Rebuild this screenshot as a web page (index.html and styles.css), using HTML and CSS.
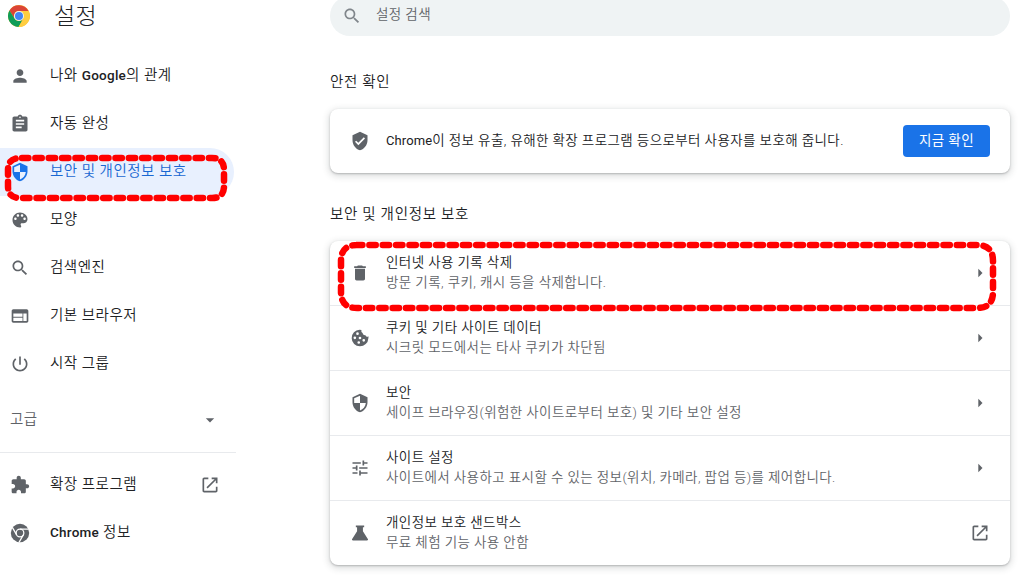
FILE: index.html
```html
<!DOCTYPE html>
<html lang="ko">
<head>
    <meta charset="UTF-8">
    <meta name="viewport" content="width=device-width, initial-scale=1.0">
    <title>설정</title>
    <link rel="stylesheet" href="styles.css">
</head>
<body>
    <aside class="sidebar">
        <div class="brand">
            <svg class="logo" viewBox="0 0 24 24">
                <circle cx="12" cy="12" r="12" fill="#fbc02d"/>
                <path d="M1.6 6A12 12 0 0 1 22.4 6.5H12A5.5 5.5 0 0 0 7.2 14.7z" fill="#db4437"/>
                <path d="M1.6 6A12 12 0 0 0 11.5 24l5.3-9.2A5.5 5.5 0 0 1 7.2 14.7z" fill="#0f9d58"/>
                <path d="M22.4 6.5H12a5.5 5.5 0 0 1 4.8 8.3L11.5 24A12 12 0 0 0 22.4 6.5z" fill="#ffcd40"/>
                <circle cx="12" cy="12" r="5.5" fill="#f1f1f1"/>
                <circle cx="12" cy="12" r="4.4" fill="#4285f4"/>
            </svg>
            <h1>설정</h1>
        </div>
        <nav class="menu">
            <a class="menu-item">
                <svg class="icon" viewBox="0 0 24 24"><path d="M12 12c2.21 0 4-1.79 4-4s-1.79-4-4-4-4 1.79-4 4 1.79 4 4 4zm0 2c-2.67 0-8 1.34-8 4v2h16v-2c0-2.66-5.33-4-8-4z"/></svg>
                <span>나와 <b>Google</b>의 관계</span>
            </a>
            <a class="menu-item">
                <svg class="icon" viewBox="0 0 24 24"><path d="M19 3h-4.18C14.4 1.84 13.3 1 12 1s-2.4.84-2.82 2H5c-1.1 0-2 .9-2 2v14c0 1.1.9 2 2 2h14c1.1 0 2-.9 2-2V5c0-1.1-.9-2-2-2zm-7 0c.55 0 1 .45 1 1s-.45 1-1 1-1-.45-1-1 .45-1 1-1zm2 14H7v-2h7v2zm3-4H7v-2h10v2zm0-4H7V7h10v2z"/></svg>
                <span>자동 완성</span>
            </a>
            <a class="menu-item active">
                <svg class="icon" viewBox="0 0 24 24"><path d="M12 1L3 5v6c0 5.55 3.84 10.74 9 12 5.16-1.26 9-6.45 9-12V5l-9-4zm0 10.99h7c-.53 4.12-3.28 7.79-7 8.94V12H5V6.3l7-3.11v8.8z"/></svg>
                <span>보안 및 개인정보 보호</span>
            </a>
            <a class="menu-item">
                <svg class="icon" viewBox="0 0 24 24"><path d="M12 3c-4.97 0-9 4.03-9 9s4.03 9 9 9c.83 0 1.5-.67 1.5-1.5 0-.39-.15-.74-.39-1.01-.23-.26-.38-.61-.38-.99 0-.83.67-1.5 1.5-1.5H16c2.76 0 5-2.24 5-5 0-4.42-4.03-8-9-8zm-5.5 9c-.83 0-1.5-.67-1.5-1.5S5.67 9 6.5 9 8 9.67 8 10.5 7.33 12 6.5 12zm3-4C8.67 8 8 7.33 8 6.5S8.67 5 9.5 5s1.5.67 1.5 1.5S10.33 8 9.5 8zm5 0c-.83 0-1.5-.67-1.5-1.5S13.67 5 14.5 5s1.5.67 1.5 1.5S15.33 8 14.5 8zm3 4c-.83 0-1.5-.67-1.5-1.5S16.67 9 17.5 9s1.5.67 1.5 1.5-.67 1.5-1.5 1.5z"/></svg>
                <span>모양</span>
            </a>
            <a class="menu-item">
                <svg class="icon" viewBox="0 0 24 24"><path d="M15.5 14h-.79l-.28-.27C15.41 12.59 16 11.11 16 9.5 16 5.91 13.09 3 9.5 3S3 5.91 3 9.5 5.91 16 9.5 16c1.61 0 3.09-.59 4.23-1.57l.27.28v.79l5 4.99L20.49 19l-4.99-5zm-6 0C7.01 14 5 11.99 5 9.5S7.01 5 9.5 5 14 7.01 14 9.5 11.99 14 9.5 14z"/></svg>
                <span>검색엔진</span>
            </a>
            <a class="menu-item">
                <svg class="icon" viewBox="0 0 24 24"><path d="M20 4H4c-1.1 0-1.99.9-1.99 2L2 18c0 1.1.9 2 2 2h16c1.1 0 2-.9 2-2V6c0-1.1-.9-2-2-2zm-5 14H4v-4h11v4zm0-5H4V9h11v4zm5 5h-4V9h4v9z"/></svg>
                <span>기본 브라우저</span>
            </a>
            <a class="menu-item">
                <svg class="icon" viewBox="0 0 24 24"><path d="M13 3h-2v10h2V3zm4.83 2.17l-1.42 1.42C17.99 7.86 19 9.81 19 12c0 3.87-3.13 7-7 7s-7-3.13-7-7c0-2.19 1.01-4.14 2.58-5.42L6.17 5.17C4.23 6.82 3 9.26 3 12c0 4.97 4.03 9 9 9s9-4.03 9-9c0-2.74-1.23-5.18-3.17-6.83z"/></svg>
                <span>시작 그룹</span>
            </a>
        </nav>
        <div class="advanced">
            <span>고급</span>
            <svg class="icon" viewBox="0 0 24 24"><path d="M7 10l5 5 5-5z"/></svg>
        </div>
        <nav class="menu menu-bottom">
            <a class="menu-item">
                <svg class="icon" viewBox="0 0 24 24"><path d="M20.5 11H19V7c0-1.1-.9-2-2-2h-4V3.5C13 2.12 11.88 1 10.5 1S8 2.12 8 3.5V5H4c-1.1 0-1.99.9-1.99 2v3.8H3.5c1.49 0 2.7 1.21 2.7 2.7s-1.21 2.7-2.7 2.7H2V20c0 1.1.9 2 2 2h3.8v-1.5c0-1.49 1.21-2.7 2.7-2.7 1.49 0 2.7 1.21 2.7 2.7V22H17c1.1 0 2-.9 2-2v-4h1.5c1.38 0 2.5-1.12 2.5-2.5S21.88 11 20.5 11z"/></svg>
                <span>확장 프로그램</span>
                <svg class="icon launch" viewBox="0 0 24 24"><path d="M19 19H5V5h5V3H5c-1.11 0-2 .9-2 2v14c0 1.1.89 2 2 2h14c1.1 0 2-.9 2-2v-5h-2v5zM14 3v2h3.59l-9.83 9.83 1.41 1.41L19 6.41V10h2V3h-7z"/></svg>
            </a>
            <a class="menu-item">
                <svg class="icon" viewBox="0 0 24 24">
                    <circle cx="12" cy="12" r="11"/>
                    <g fill="none" stroke="#fff" stroke-width="1.5">
                        <circle cx="12" cy="12" r="4.6"/>
                        <path d="M12 7.4h10.5M8 14.3L2.8 5.3M16 14.3L10.8 23.3"/>
                    </g>
                </svg>
                <span><b>Chrome</b> 정보</span>
            </a>
        </nav>
    </aside>

    <main class="content">
        <div class="search">
            <svg class="icon" viewBox="0 0 24 24"><path d="M15.5 14h-.79l-.28-.27C15.41 12.59 16 11.11 16 9.5 16 5.91 13.09 3 9.5 3S3 5.91 3 9.5 5.91 16 9.5 16c1.61 0 3.09-.59 4.23-1.57l.27.28v.79l5 4.99L20.49 19l-4.99-5zm-6 0C7.01 14 5 11.99 5 9.5S7.01 5 9.5 5 14 7.01 14 9.5 11.99 14 9.5 14z"/></svg>
            <span>설정 검색</span>
        </div>

        <h2>안전 확인</h2>
        <section class="card safety">
            <svg class="icon" viewBox="0 0 24 24"><path d="M12 1L3 5v6c0 5.55 3.84 10.74 9 12 5.16-1.26 9-6.45 9-12V5l-9-4zm-2 16l-4-4 1.41-1.41L10 14.17l6.59-6.59L18 9l-8 8z"/></svg>
            <p><span class="latin">Chrome</span>이 정보 유출, 유해한 확장 프로그램 등으로부터 사용자를 보호해 줍니다.</p>
            <button>지금 확인</button>
        </section>

        <h2 class="second">보안 및 개인정보 보호</h2>
        <section class="card">
            <div class="row">
                <svg class="icon" viewBox="0 0 24 24"><path d="M6 19c0 1.1.9 2 2 2h8c1.1 0 2-.9 2-2V7H6v12zM19 4h-3.5l-1-1h-5l-1 1H5v2h14V4z"/></svg>
                <div class="text">
                    <div class="title">인터넷 사용 기록 삭제</div>
                    <div class="desc">방문 기록, 쿠키, 캐시 등을 삭제합니다.</div>
                </div>
                <svg class="icon" viewBox="0 0 24 24"><path d="M10 7l5 5-5 5z"/></svg>
            </div>
            <div class="row">
                <svg class="icon" viewBox="0 0 24 24"><path fill-rule="evenodd" d="M11.5 2A10 10 0 1 0 22 12.5l.3-2.2c-1.5.4-3.2-.2-3.7-1.700-2 .3-3.500-1-3.300-2.700-1.500-.7-2.100-2-1.500-3.600zM9 5.200a1.600 1.600 0 1 1 0 3.200 1.600 1.600 0 0 1 0-3.200zM5.800 10.200a1.600 1.600 0 1 1 0 3.200 1.600 1.600 0 0 1 0-3.200zM12 10.400a1.600 1.600 0 1 1 0 3.200 1.600 1.600 0 0 1 0-3.200zM10.500 15.800a1.600 1.600 0 1 1 0 3.200 1.600 1.600 0 0 1 0-3.200zM16.500 13.200a1.600 1.600 0 1 1 0 3.200 1.600 1.600 0 0 1 0-3.200z"/></svg>
                <div class="text">
                    <div class="title">쿠키 및 기타 사이트 데이터</div>
                    <div class="desc">시크릿 모드에서는 타사 쿠키가 차단됨</div>
                </div>
                <svg class="icon" viewBox="0 0 24 24"><path d="M10 7l5 5-5 5z"/></svg>
            </div>
            <div class="row">
                <svg class="icon" viewBox="0 0 24 24"><path d="M12 1L3 5v6c0 5.55 3.84 10.74 9 12 5.16-1.26 9-6.45 9-12V5l-9-4zm0 10.99h7c-.53 4.12-3.28 7.79-7 8.94V12H5V6.3l7-3.11v8.8z"/></svg>
                <div class="text">
                    <div class="title">보안</div>
                    <div class="desc">세이프 브라우징(위험한 사이트로부터 보호) 및 기타 보안 설정</div>
                </div>
                <svg class="icon" viewBox="0 0 24 24"><path d="M10 7l5 5-5 5z"/></svg>
            </div>
            <div class="row">
                <svg class="icon" viewBox="0 0 24 24"><path d="M3 17v2h6v-2H3zM3 5v2h10V5H3zm10 16v-2h8v-2h-8v-2h-2v6h2zM7 9v2H3v2h4v2h2V9H7zm14 4v-2H11v2h10zm-6-4h2V7h4V5h-4V3h-2v6z"/></svg>
                <div class="text">
                    <div class="title">사이트 설정</div>
                    <div class="desc">사이트에서 사용하고 표시할 수 있는 정보(위치, 카메라, 팝업 등)를 제어합니다.</div>
                </div>
                <svg class="icon" viewBox="0 0 24 24"><path d="M10 7l5 5-5 5z"/></svg>
            </div>
            <div class="row">
                <svg class="icon" viewBox="0 0 24 24"><path d="M7 3h10v2h-1.5v5l5.9 9.2c.6.9 0 1.8-1 1.8H3.6c-1 0-1.6-.9-1-1.8L8.5 10V5H7z"/></svg>
                <div class="text">
                    <div class="title">개인정보 보호 샌드박스</div>
                    <div class="desc">무료 체험 기능 사용 안함</div>
                </div>
                <svg class="icon" viewBox="0 0 24 24"><path d="M19 19H5V5h5V3H5c-1.11 0-2 .9-2 2v14c0 1.1.89 2 2 2h14c1.1 0 2-.9 2-2v-5h-2v5zM14 3v2h3.59l-9.83 9.83 1.41 1.41L19 6.41V10h2V3h-7z"/></svg>
            </div>
        </section>
    </main>

    <!-- red dashed marks over the menu item and the first row -->
    <svg class="marks" viewBox="0 0 1026 583">
        <path d="M22 158H212Q224 158 224 170V186Q224 198 212 198H20Q8 198 8 186V170Q8 158 20 158z"/>
        <path d="M356 245H977Q993 245 993 261V292Q993 308 977 308H357Q341 308 341 292V261Q341 245 357 245z"/>
    </svg>
</body>
</html>
```

FILE: styles.css
```css
* {
    box-sizing: border-box;
}
body {
    margin: 0;
    height: 583px;
    overflow: hidden;
    display: flex;
    background: #fff;
    color: #202124;
    font-family: Roboto, "Noto Sans CJK KR", sans-serif;
    font-size: 13.5px;
    font-weight: 350;
    line-height: 20px;
    letter-spacing: .4px;
}
h1, h2, p {
    margin: 0;
    font-weight: 350;
}
.icon {
    width: 20px;
    height: 20px;
    flex: none;
    fill: #5f6368;
}

.sidebar {
    width: 330px;
    flex: none;
}
.brand {
    display: flex;
    align-items: center;
    height: 52px;
    padding: 0 0 20px 8px;
}
.logo {
    width: 22px;
    height: 22px;
}
h1 {
    margin: 2px 0 0 24px;
    font-size: 23px;
    font-weight: 300;
    line-height: 32px;
}
.menu-item {
    display: flex;
    align-items: center;
    width: 234px;
    height: 48px;
    padding-left: 10px;
    border-radius: 0 24px 24px 0;
    font-size: 14.5px;
    letter-spacing: .5px;
}
.menu-item span {
    margin-left: 20px;
}
.menu-item b {
    font-size: 13.5px;
    font-weight: 500;
    line-height: 0;
    letter-spacing: .25px;
}
.menu-item .launch {
    margin: 0 14px 0 auto;
}
.active {
    background: #e8f0fe;
    color: #1967d2;
}
.active .icon {
    fill: #1a73e8;
}
.advanced {
    display: flex;
    align-items: center;
    justify-content: space-between;
    width: 236px;
    height: 65px;
    padding: 0 16px 0 10px;
    border-bottom: 1px solid #e8eaed;
    color: #5f6368;
    font-size: 14.5px;
}
.menu-bottom {
    padding-top: 8px;
}

.content {
    width: 680px;
}
.search {
    display: flex;
    align-items: center;
    height: 40px;
    margin-top: -4px;
    padding-left: 12px;
    border-radius: 20px;
    background: #eff3f4;
    color: #5f6368;
}
.search .icon {
    fill: #80868b;
}
.search span {
    margin: 0 0 4px 14px;
}
h2 {
    padding: 37px 0 16px;
    font-size: 14.5px;
    letter-spacing: .7px;
}
.second {
    padding: 32px 0 16px;
}
.card {
    border-radius: 8px;
    background: #fff;
    box-shadow: 0 1px 2px rgba(60, 64, 67, .3), 0 2px 6px 2px rgba(60, 64, 67, .15);
}
.safety {
    display: flex;
    align-items: center;
    height: 64px;
    padding: 0 20px;
}
.safety p {
    flex: 1;
    margin: 0 0 2px 16px;
}
.latin {
    font-size: 13px;
    font-weight: 400;
    letter-spacing: .1px;
}
button {
    width: 87px;
    height: 32px;
    padding: 0 0 2px;
    border: 0;
    border-radius: 4px;
    background: #1a73e8;
    color: #fff;
    font: inherit;
    font-weight: 400;
    letter-spacing: inherit;
}
.row {
    display: flex;
    align-items: center;
    height: 64px;
    padding: 0 20px;
}
.row + .row {
    height: 65px;
    border-top: 1px solid #e8eaed;
}
.text {
    flex: 1;
    margin-left: 16px;
    padding-bottom: 2px;
}
.desc {
    color: #5f6368;
}

.marks {
    position: absolute;
    top: 0;
    left: 0;
    width: 1026px;
    height: 583px;
    pointer-events: none;
    fill: none;
    stroke: #f00;
    stroke-width: 6.5;
    stroke-linecap: round;
    stroke-dasharray: 6.4 6.95;
}
```
